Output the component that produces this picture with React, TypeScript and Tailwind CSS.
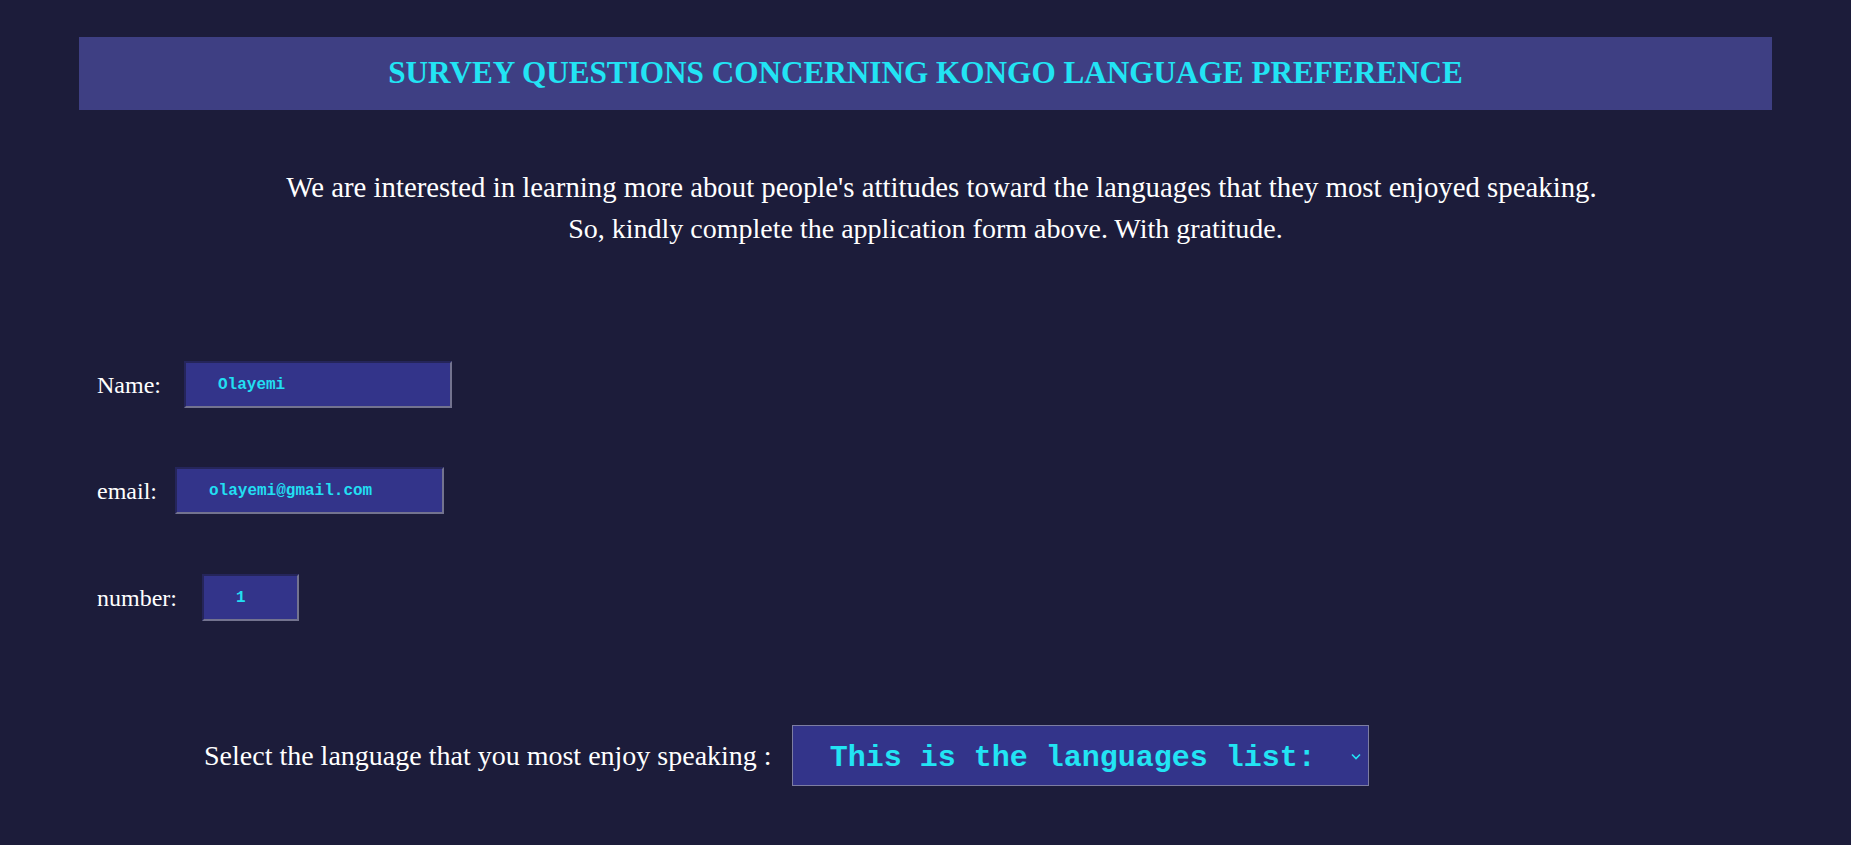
import React from 'react';

const serif = { fontFamily: '"Liberation Serif", "Times New Roman", serif' };
const mono = { fontFamily: '"Liberation Mono", "Courier New", monospace' };

const inputCls =
  'h-[47px] bg-[#33348a] text-[#22dff2] text-[16px] font-bold pl-[32px] outline-none border-2 border-t-[#25255a] border-l-[#25255a] border-b-[#73738f] border-r-[#73738f]';

export default function App() {
  return (
    <div className="min-h-[845px] bg-[#1c1c3a] text-white" style={serif}>
      <div className="px-[79px] pt-[37px]">
        <div className="h-[73px] bg-[#3e3f83] flex items-center justify-center">
          <h1 className="text-[31.2px] font-bold text-[#22e4f4]">
            SURVEY QUESTIONS CONCERNING KONGO LANGUAGE PREFERENCE
          </h1>
        </div>

        <div className="mt-[56px] text-center leading-[42px]">
          <p className="text-[28.8px] pl-[32px]">We are interested in learning more about people's attitudes toward the languages that they most enjoyed speaking.</p>
          <p className="text-[28px]">So, kindly complete the application form above. With gratitude.</p>
        </div>
      </div>

      <form className="pl-[97px] mt-[111px]">
        <div className="flex items-center h-[47px]">
          <label className="text-[24px]">Name:</label>
          <input className={`${inputCls} ml-[23px] w-[268px]`} style={mono} defaultValue="Olayemi" />
        </div>
        <div className="flex items-center h-[47px] mt-[59px]">
          <label className="text-[24px]">email:</label>
          <input className={`${inputCls} ml-[18px] w-[269px]`} style={mono} defaultValue="olayemi@gmail.com" />
        </div>
        <div className="flex items-center h-[47px] mt-[60px]">
          <label className="text-[24px]">number:</label>
          <input className={`${inputCls} ml-[25px] w-[97px]`} style={mono} defaultValue="1" />
        </div>

        <div className="flex items-center mt-[104px] pl-[107px] pb-[59px]">
          <label className="text-[28px]">Select the language that you most enjoy speaking :</label>
          <div className="relative ml-[20px] w-[577px] h-[61px] bg-[#33348a] border border-[#7d7da2] flex items-center pt-[6px]">
            <span className="pl-[37px] text-[30px] font-bold text-[#22e4f4]" style={mono}>
              This is the languages list:
            </span>
            <svg className="absolute right-[7px] top-[27px]" width="10" height="7" viewBox="0 0 10 7">
              <path d="M1 1.5 L5 5.5 L9 1.5" fill="none" stroke="#22e4f4" strokeWidth="1.6" />
            </svg>
          </div>
        </div>
      </form>
    </div>
  );
}
